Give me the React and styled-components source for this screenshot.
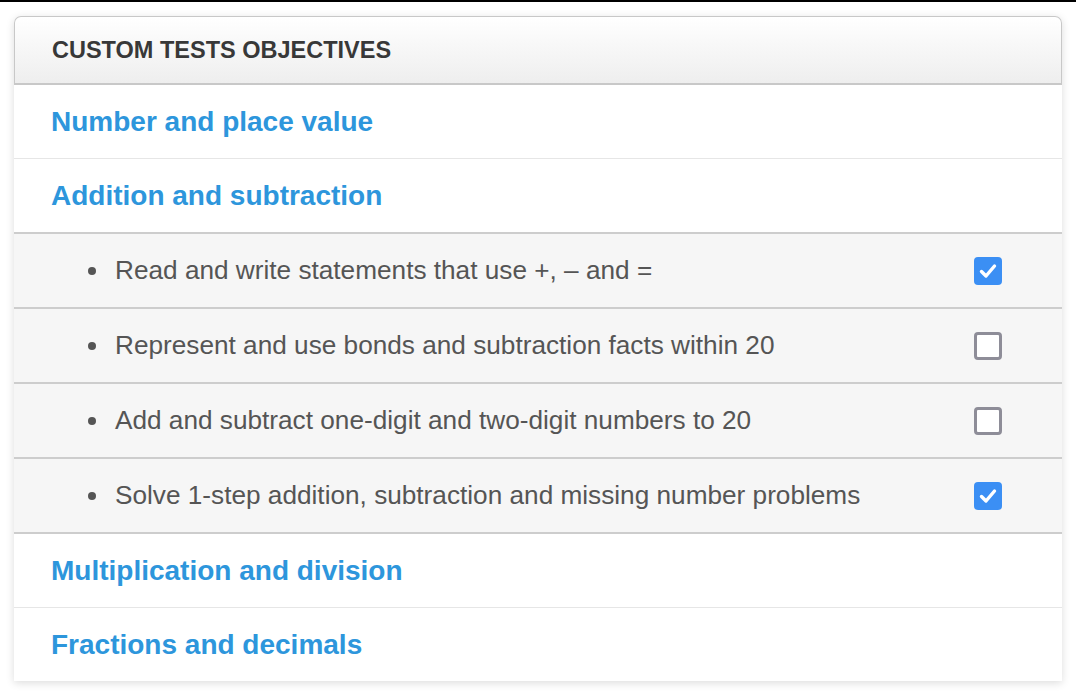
import React from "react";
import styled, { createGlobalStyle } from "styled-components";

const GlobalStyle = createGlobalStyle`
  html, body {
    margin: 0;
    padding: 0;
    background: #fff;
    font-family: "Liberation Sans", Arial, sans-serif;
  }
  body {
    border-top: 2px solid #000;
  }
`;

const Page = styled.div`
  padding: 14px 14px 14px 14px;
`;

const Card = styled.div`
  background: #fff;
  border-radius: 7px 7px 0 0;
  box-shadow: 0 2px 8px rgba(0, 0, 0, 0.14);
`;

const Header = styled.div`
  height: 66px;
  display: flex;
  align-items: center;
  padding: 0 37px;
  background: linear-gradient(#ffffff, #eeeeee);
  border: 1px solid #c8c8c8;
  border-bottom: 2px solid #c8c8c8;
  border-radius: 7px 7px 0 0;
  font-size: 23.5px;
  font-weight: bold;
  color: #383838;
`;

const Section = styled.div`
  height: 73px;
  display: flex;
  align-items: center;
  padding: 0 37px;
  border-bottom: 1px solid #e6e6e6;
  color: #2d96dc;
  font-size: 28px;
  font-weight: bold;
  &:last-child {
    border-bottom: none;
  }
`;

const SubList = styled.ul`
  margin: 0;
  padding: 0;
  list-style: none;
  background: #f6f6f6;
  border-top: 2px solid #cdcdcd;
  margin-top: -1px;
`;

const SubItem = styled.li`
  height: 73px;
  display: flex;
  align-items: center;
  padding: 0 60px 0 74px;
  border-bottom: 2px solid #cdcdcd;
  font-size: 26.2px;
  color: #555;
`;

const Bullet = styled.span`
  width: 8px;
  height: 8px;
  border-radius: 50%;
  background: #555;
  margin-right: 19px;
  flex: none;
`;

const Label = styled.span`
  flex: 1;
`;

const Box = styled.span`
  width: 28px;
  height: 28px;
  box-sizing: border-box;
  border-radius: 4px;
  display: flex;
  align-items: center;
  justify-content: center;
  background: ${(p) => (p.checked ? "#3b8ff4" : "#fff")};
  border: ${(p) => (p.checked ? "none" : "3px solid #8e8d98")};
`;

const Check = ({ checked }) => (
  <Box checked={checked}>
    {checked && (
      <svg width="20" height="18" viewBox="0 0 20 18">
        <path
          d="M3.5 9.5 L8 14 L16.5 4"
          fill="none"
          stroke="#fff"
          strokeWidth="3.4"
          strokeLinecap="round"
          strokeLinejoin="round"
        />
      </svg>
    )}
  </Box>
);

const objectives = [
  { text: "Read and write statements that use +, – and =", checked: true },
  { text: "Represent and use bonds and subtraction facts within 20", checked: false },
  { text: "Add and subtract one-digit and two-digit numbers to 20", checked: false },
  { text: "Solve 1-step addition, subtraction and missing number problems", checked: true },
];

export default function App() {
  return (
    <Page>
      <GlobalStyle />
      <Card>
        <Header>CUSTOM TESTS OBJECTIVES</Header>
        <Section>Number and place value</Section>
        <Section>Addition and subtraction</Section>
        <SubList>
          {objectives.map((o) => (
            <SubItem key={o.text}>
              <Bullet />
              <Label>{o.text}</Label>
              <Check checked={o.checked} />
            </SubItem>
          ))}
        </SubList>
        <Section>Multiplication and division</Section>
        <Section>Fractions and decimals</Section>
      </Card>
    </Page>
  );
}
